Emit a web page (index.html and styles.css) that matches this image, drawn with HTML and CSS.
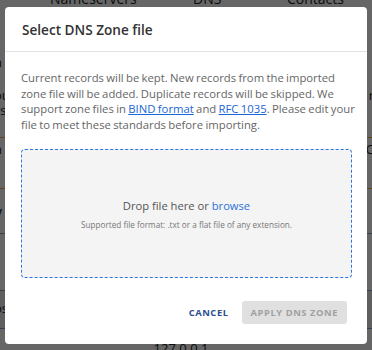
FILE: index.html
```html
<!DOCTYPE html>
<html>
<head>
<meta charset="utf-8">
<link rel="stylesheet" href="styles.css">
</head>
<body>
<div class="page">
  <div class="tabs">
    <span class="tab t1">Nameservers</span>
    <span class="tab t2">DNS</span>
    <span class="tab t3">Contacts</span>
  </div>
  <div class="row r1"><span class="l">n</span><span class="r"></span></div>
  <div class="row r1b"><span class="l">ou<br>ss</span><span class="r">r</span></div>
  <div class="row r2"><span class="l">n<br>s</span><span class="r">C</span></div>
  <div class="row r3"><span class="l">y</span></div>
  <div class="row r4"><span class="l"></span></div>
  <div class="row r5"><span class="l">os</span></div>
  <div class="row r6"><span class="c">127.0.0.1</span></div>
</div>
<div class="overlay">
  <div class="modal">
    <div class="modal-header">Select DNS Zone file</div>
    <div class="modal-body">
      <p class="intro">Current records will be kept. New records from the imported<br>zone file will be added. Duplicate records will be skipped. We<br>support zone files in <a href="#">BIND format</a> and <a href="#">RFC 1035</a>. Please edit your<br>file to meet these standards before importing.</p>
      <div class="dropzone">
        <div class="drop-title">Drop file here or <span class="browse">browse</span></div>
        <div class="drop-hint">Supported file format: .txt or a flat file of any extension.</div>
      </div>
    </div>
    <div class="modal-footer">
      <button class="btn-text">CANCEL</button>
      <button class="btn-disabled">APPLY DNS ZONE</button>
    </div>
  </div>
</div>
</body>
</html>
```
FILE: styles.css
```css
html, body {
  margin: 0;
  padding: 0;
}
body {
  width: 372px;
  height: 350px;
  overflow: hidden;
  position: relative;
  font-family: "Open Sans", "Noto Sans", sans-serif;
  background: #fff;
}
.page {
  color: #222;
  font-size: 13px;
  height: 350px;
  overflow: hidden;
}
.tabs {
  height: 10px;
  position: relative;
  font-size: 14px;
  line-height: 18px;
}
.tab { position: absolute; top: -10px; }
.t1 { left: 50px; }
.t2 { left: 193px; }
.t3 { left: 287px; }
.row {
  display: flex;
  justify-content: space-between;
  box-sizing: border-box;
  line-height: 15px;
}
.row .l { margin-left: -6px; }
.row .r { margin-right: -2px; }
.r1 { height: 70px; padding-top: 45px; }
.r1b { height: 58px; border-bottom: 1px solid #e8b24a; padding-top: 8px; }
.r2 { height: 51px; border-bottom: 1px solid #e8b24a; padding-top: 4px; }
.r3 { height: 45px; border-top: 6px solid #fff; border-bottom: 1px solid #8aa0c8; padding-top: 10px; font-size: 16px; }
.r4 { height: 57px; border-bottom: 1px solid #8aa0c8; }
.r5 { height: 38px; border-bottom: 1px solid #8aa0c8; background: #eee; padding-top: 10px; }
.r6 { justify-content: center; padding-top: 12px; }
.r6 .c { margin-left: -10px; }

.overlay {
  position: absolute;
  inset: 0;
  background: rgba(0, 0, 0, 0.6);
  padding: 7px 5px 6px;
  box-sizing: border-box;
  display: flex;
}
.modal {
  flex: 1;
  background: #fff;
  border-radius: 4px;
  display: flex;
  flex-direction: column;
}
.modal-header {
  height: 44px;
  border-bottom: 1px solid #e2e2e2;
  display: flex;
  align-items: center;
  padding-left: 17px;
  font-size: 13.6px;
  font-weight: 600;
  color: #333;
}
.modal-body {
  padding: 0 15px 0 16px;
}
.intro {
  margin: 18px -12px 16px 0;
  font-size: 11.3px;
  line-height: 15.7px;
  color: #666;
  white-space: nowrap;
  word-spacing: -0.6px;
}
.intro a {
  color: #1a66d6;
  text-decoration: underline;
}
.dropzone {
  height: 129px;
  box-sizing: border-box;
  border: 1px dashed #2f74e0;
  border-radius: 4px;
  background: #f4f4f4;
  display: flex;
  flex-direction: column;
  align-items: center;
  justify-content: center;
  padding-top: 2px;
}
.drop-title {
  font-size: 11.2px;
  color: #555;
  line-height: 16px;
}
.browse { color: #2a72d9; }
.drop-hint {
  margin-top: 5px;
  font-size: 8.2px;
  color: #777;
  line-height: 12px;
}
.modal-footer {
  display: flex;
  justify-content: flex-end;
  align-items: center;
  gap: 6px;
  padding: 23px 20px 0 0;
}
.btn-text, .btn-disabled {
  font-family: "Open Sans", "Noto Sans", sans-serif;
  font-size: 9.4px;
  font-weight: 700;
  letter-spacing: 0.55px;
  border: none;
  height: 23px;
  padding: 0 9px;
  border-radius: 3px;
}
.btn-text {
  background: transparent;
  color: #2c4f91;
  padding: 0 7px;
}
.btn-disabled {
  background: #e0e0e0;
  color: #a0a0a0;
}
```
